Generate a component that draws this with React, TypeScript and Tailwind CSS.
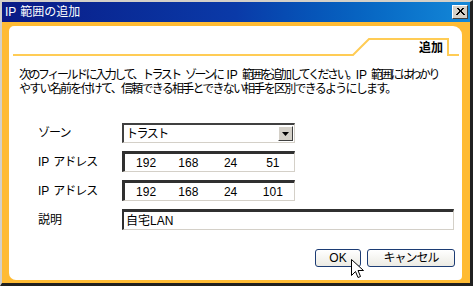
import React from 'react';

const IpField = ({ parts }: { parts: string[] }) => (
  <div className="flex h-[21px] w-[173px] bg-white border-t-[3px] border-l-[3px] border-r border-b border-t-[#303030] border-l-[#303030] border-r-[#d4d0c8] border-b-[#d4d0c8]">
    {parts.map((p, i) => (
      <div key={i} className="flex flex-1 items-center justify-center text-[12px] leading-none">
        {p}
      </div>
    ))}
  </div>
);

const Row = ({ label, children }: { label: React.ReactNode; children: React.ReactNode }) => (
  <div className="flex items-center">
    <div className="w-[84px] pl-[29px] box-content whitespace-nowrap text-[12px]">{label}</div>
    {children}
  </div>
);

const ipLabel = (
  <>
    <span className="mr-[4px]">IP</span>
    <span className="tracking-[-1px]">アドレス</span>
  </>
);

export default function App() {
  return (
    <div className="relative h-[286px] w-[473px] overflow-hidden bg-white font-['Liberation_Sans','Noto_Sans_CJK_JP',sans-serif] text-black">
      <div className="flex h-full flex-col border-t-2 border-l-2 border-r-[3px] border-b-[3px] border-t-[#d4d0c8] border-l-[#d4d0c8] border-r-[#202020] border-b-[#202020]">
        {/* title bar */}
        <div className="flex h-[20px] items-center justify-between bg-gradient-to-r from-[#0a1a86] via-[#0a3aa8] to-[#1488d8] pl-[3px] pr-[2px]">
          <span className="text-[12px] text-white">
            <span className="mr-[4px]">IP</span>範囲の追加
          </span>
          <div className="flex h-[14px] w-[16px] items-center justify-center border border-t-white border-l-white border-r-[#404040] border-b-[#404040] bg-[#d4d0c8]">
            <svg width="9" height="8" viewBox="0 0 9 8">
              <path d="M1 0 L8 7 M8 0 L1 7 M2 0 L9 7 M7 0 L0 7" stroke="#000" strokeWidth="1" fill="none" />
            </svg>
          </div>
        </div>

        {/* orange frame */}
        <div className="flex flex-1 flex-col bg-[#ffbb33] pl-[7px] pt-[4px] pr-[8px] pb-[3px]">
          <div className="flex flex-1 flex-col rounded-tl-[5px] rounded-tr-[9px] rounded-bl-[7px] rounded-br-[4px] bg-white">
            {/* tab header */}
            <div className="relative h-[32px]">
              <svg className="absolute inset-0" width="453" height="32" viewBox="0 0 453 32">
                <path d="M4 29 H344 L360 13 H439 V29 H450" stroke="#ffcc55" strokeWidth="2" fill="none" />
              </svg>
              <div className="absolute right-[19px] top-[13px] text-[12px] font-bold">追加</div>
            </div>

            <p className="mt-[10px] pl-[10px] text-[12px] leading-[14px] whitespace-nowrap">
              <span className="tracking-[-2.45px]">次のフィールドに入力して、トラスト</span>
              <span className="ml-[5px] tracking-[-2.45px]">ゾーンに</span>
              <span className="mx-[4px]">IP</span>
              <span className="tracking-[-2.45px]">範囲を追加してください。</span>
              <span className="mr-[4px]">IP</span>
              <span className="tracking-[-2.45px]">範囲にはわかり</span>
              <br />
              <span className="tracking-[-1.75px]">やすい名前を付けて、信頼できる相手とできない相手を区別できるようにします。</span>
            </p>

            <div className="mt-[27px] flex flex-col gap-[8px]">
              <Row label={<span className="tracking-[-1px]">ゾーン</span>}>
                <div className="flex h-[20px] w-[173px] items-center justify-between bg-white border-t-2 border-l-2 border-r border-b border-t-[#404040] border-l-[#404040] border-r-[#d4d0c8] border-b-[#d4d0c8] pr-[1px]">
                  <span className="pl-[2px] text-[12px] tracking-[-1.5px]">トラスト</span>
                  <div className="flex h-[15px] w-[15px] items-center justify-center border border-t-white border-l-white border-r-[#404040] border-b-[#404040] bg-[#d4d0c8]">
                    <svg width="7" height="4" viewBox="0 0 7 4">
                      <path d="M0 0 H7 L3.5 4 Z" fill="#000" />
                    </svg>
                  </div>
                </div>
              </Row>
              <Row label={ipLabel}>
                <IpField parts={['192', '168', '24', '51']} />
              </Row>
              <Row label={ipLabel}>
                <IpField parts={['192', '168', '24', '101']} />
              </Row>
              <Row label="説明">
                <div className="flex h-[21px] w-[332px] items-center bg-white border-t-[3px] border-l-2 border-r border-b border-t-[#303030] border-l-[#303030] border-r-[#d4d0c8] border-b-[#d4d0c8] pl-[2px] text-[12px]">
                  自宅LAN
                </div>
              </Row>
            </div>

            <div className="mt-[19px] flex justify-end gap-[6px] pr-[7px]">
              <button className="flex h-[18px] w-[46px] items-center justify-center rounded-[3px] border border-[#1c3c74] bg-gradient-to-b from-white to-[#ecebe4] text-[12px]">
                OK
              </button>
              <button className="flex h-[18px] w-[88px] items-center justify-center rounded-[3px] border border-[#1c3c74] bg-gradient-to-b from-white to-[#ecebe4] text-[12px] tracking-[-1px]">
                キャンセル
              </button>
            </div>
          </div>
        </div>
      </div>

      {/* mouse cursor */}
      <svg className="absolute left-[351px] top-[259px]" width="13" height="21" viewBox="0 0 13 21">
        <path d="M0.5 0.5 V16.5 L4.5 12.5 L7 18.5 L9.5 17.5 L7 11.5 H12.5 Z" fill="#fff" stroke="#000" strokeWidth="1" />
      </svg>
    </div>
  );
}
